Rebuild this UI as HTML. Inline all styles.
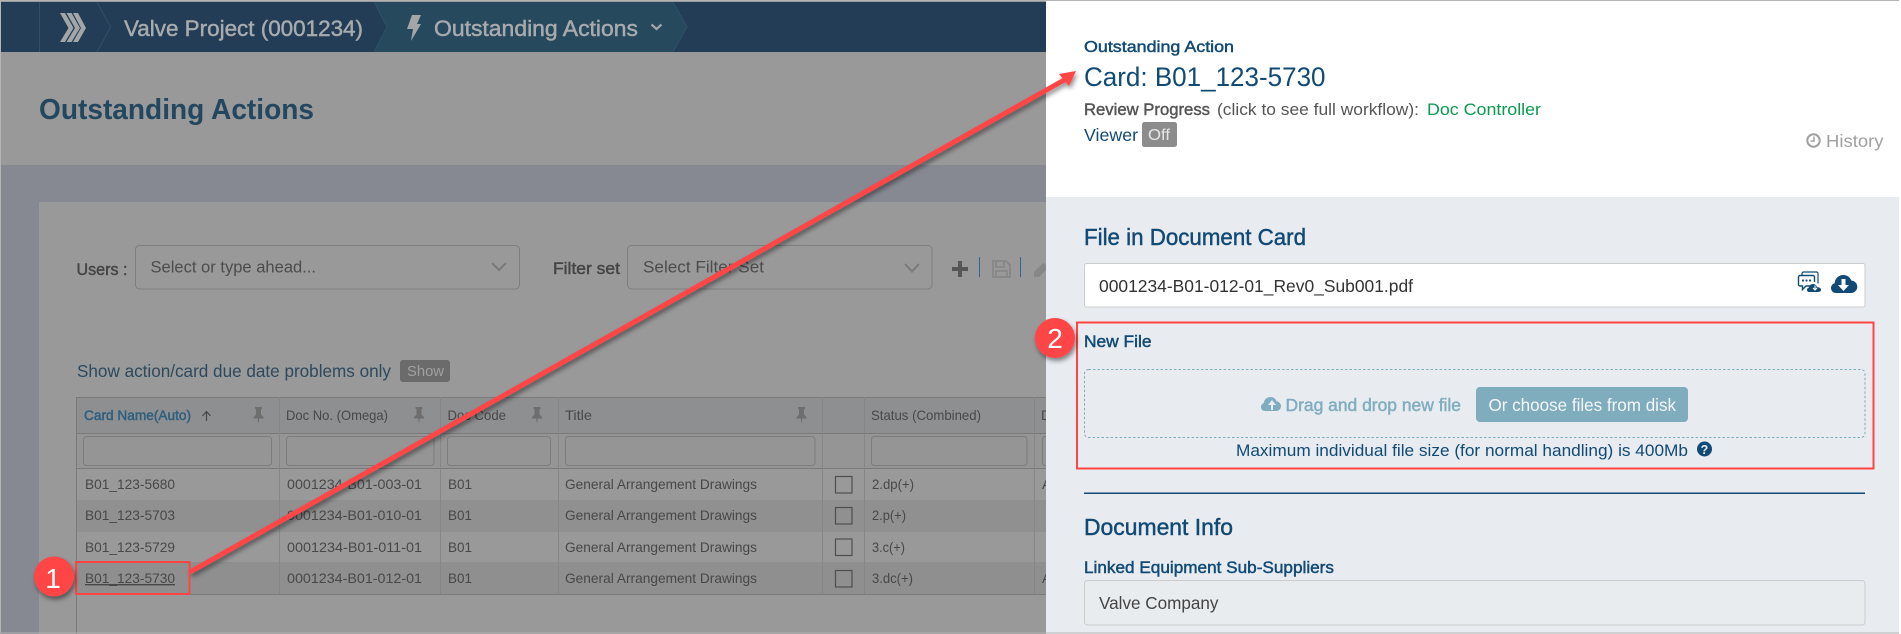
<!DOCTYPE html>
<html><head><meta charset="utf-8"><title>Outstanding Actions</title>
<style>
html,body{margin:0;padding:0;background:#999;width:1901px;height:634px;overflow:hidden}
svg{display:block}
text{font-family:"Liberation Sans",sans-serif;white-space:pre}
.m{stroke-width:.45px;paint-order:stroke}
</style></head><body>
<svg xmlns="http://www.w3.org/2000/svg" width="1901" height="634" viewBox="0 0 1901 634">
<defs>
<filter id="s" x="-20%" y="-20%" width="140%" height="140%"><feDropShadow dx="1.5" dy="3" stdDeviation="2.5" flood-color="#000" flood-opacity=".45"/></filter>
<g id="pin"><path d="M2.500 0h7v1.600l-1 .7v5.200l2.500 2.600v1.400H6.800L6 17 5.200 11.500H1V10.100l2.500-2.600V2.300l-1-.7z" fill="#6e6e6e"/></g>
</defs>
<!-- left page background -->
<rect width="1046" height="634" fill="#999"/>
<rect y="165" width="1046" height="469" fill="#868992"/>
<rect x="39" y="202" width="1007" height="432" fill="#999"/>
<!-- nav -->
<rect y="2" width="1046" height="50" fill="#223d55"/>
<path d="M374 2H673L687 27 673 52H374L387 27z" fill="#27495d"/>
<path d="M39.500 2V52M97 2L110.500 27 97 52M374 2L387 27 374 52M673 2L687 27 673 52" fill="none" stroke="#2f5069" stroke-width="1"/>
<g fill="#a3a6a8">
<path d="M60 13h5l8.500 15-8.500 14h-5l8.500-14z"/>
<path d="M66.500 13h5l8.500 15-8.500 14h-5l8.500-14z"/>
<path d="M73 13h5l8 15-8 14h-5l8-14z"/>
<path d="M412 15H421L417 24H421L411 41 413 29H407z"/>
<path d="M651.500 24.500l5 4.500 5-4.500" fill="none" stroke="#a3a6a8" stroke-width="2.200"/>
</g>
<text x="124" y="36" font-size="22" fill="#a8abad" class="m" stroke="#a8abad" textLength="239" lengthAdjust="spacingAndGlyphs">Valve Project (0001234)</text>
<text x="434" y="36" font-size="22" fill="#a8abad" class="m" stroke="#a8abad" textLength="204" lengthAdjust="spacingAndGlyphs">Outstanding Actions</text>
<text x="39" y="119" font-size="29" font-weight="700" fill="#22475f" textLength="275" lengthAdjust="spacingAndGlyphs">Outstanding Actions</text>
<!-- filters -->
<text x="76.500" y="275" font-size="16.500" fill="#454545" class="m" stroke="#454545" textLength="51" lengthAdjust="spacingAndGlyphs">Users :</text>
<rect x="135.500" y="245.500" width="384" height="43.500" rx="4" fill="none" stroke="#7e7e7e"/>
<text x="150.500" y="272.500" font-size="16.500" fill="#4c4c4c" textLength="165.500" lengthAdjust="spacingAndGlyphs">Select or type ahead...</text>
<path d="M492 263l7 7 7-7" fill="none" stroke="#7a7a7a" stroke-width="2"/>
<text x="553" y="274" font-size="16.500" fill="#454545" class="m" stroke="#454545" textLength="67" lengthAdjust="spacingAndGlyphs">Filter set</text>
<rect x="627.500" y="245.500" width="304.500" height="43.500" rx="4" fill="none" stroke="#7e7e7e"/>
<text x="643" y="272.500" font-size="16.500" fill="#4c4c4c" textLength="121" lengthAdjust="spacingAndGlyphs">Select Filter Set</text>
<path d="M905 264l7 7.500 7-7.500" fill="none" stroke="#7a7a7a" stroke-width="2"/>
<path d="M958 261h4v6h6v4h-6v6h-4v-6h-6v-4h6z" fill="#565656"/>
<path d="M979.500 257v20M1020.500 257v20" stroke="#2e6a8e" stroke-width="1"/>
<path d="M993 261h13l4 4v12h-17zM996 262v5h8v-5M996 277v-6h11v6" fill="none" stroke="#878787" stroke-width="1.800"/>
<path d="M1034 277v-5l9-9 3 2v5l-7 7z" fill="#878787"/>
<!-- show -->
<text x="77" y="377" font-size="17.500" fill="#2c495e" textLength="314" lengthAdjust="spacingAndGlyphs">Show action/card due date problems only</text>
<rect x="400" y="360" width="50" height="22" rx="3" fill="#6b6b6b"/>
<text x="407" y="376" font-size="15" fill="#a0a0a0" textLength="37" lengthAdjust="spacingAndGlyphs">Show</text>
<!-- table -->
<rect x="77" y="397" width="969" height="36" fill="#8e8f90"/>
<rect x="77" y="433" width="969" height="35" fill="#959595"/>
<rect x="77" y="500" width="969" height="32" fill="#909090"/>
<rect x="77" y="562" width="969" height="32" fill="#8f8f8f"/>
<path d="M76.500 397V634M76.500 397.500H1046M76 433.500H1046M76 468.500H1046M76 594.500H1046" fill="none" stroke="#7a7a7a" stroke-width="1"/>
<path d="M279.500 397V594M440.500 397V594M558.500 397V594M822.500 397V594M864.500 397V594M1034.500 397V594" stroke="#868686" stroke-width="1"/>
<g fill="none" stroke="#7c7c7c">
<rect x="83.500" y="436.500" width="188" height="29" rx="3"/>
<rect x="286.500" y="436.500" width="147.500" height="29" rx="3"/>
<rect x="447.500" y="436.500" width="103" height="29" rx="3"/>
<rect x="565.500" y="436.500" width="249.500" height="29" rx="3"/>
<rect x="871.500" y="436.500" width="155.500" height="29" rx="3"/>
<rect x="1042.500" y="436.500" width="20" height="29" rx="3"/>
</g>
<g font-size="14" fill="#484848">
<text x="84" y="420" fill="#2d5f7f" class="m" stroke="#2d5f7f" textLength="107" lengthAdjust="spacingAndGlyphs">Card Name(Auto)</text>
<text x="286" y="420" textLength="102" lengthAdjust="spacingAndGlyphs">Doc No. (Omega)</text>
<text x="447.500" y="420" textLength="58.500" lengthAdjust="spacingAndGlyphs">Doc Code</text>
<text x="565" y="420" textLength="27" lengthAdjust="spacingAndGlyphs">Title</text>
<text x="871" y="420" textLength="110" lengthAdjust="spacingAndGlyphs">Status (Combined)</text>
<text x="1041" y="420">D</text>
<text x="85" y="489" textLength="90" lengthAdjust="spacingAndGlyphs">B01_123-5680</text>
<text x="287" y="489" textLength="135" lengthAdjust="spacingAndGlyphs">0001234-B01-003-01</text>
<text x="448" y="489" textLength="24" lengthAdjust="spacingAndGlyphs">B01</text>
<text x="565" y="489" textLength="192" lengthAdjust="spacingAndGlyphs">General Arrangement Drawings</text>
<text x="872" y="489" textLength="42" lengthAdjust="spacingAndGlyphs">2.dp(+)</text>
<text x="1042" y="489">A</text>
<text x="85" y="520" textLength="90" lengthAdjust="spacingAndGlyphs">B01_123-5703</text>
<text x="287" y="520" textLength="135" lengthAdjust="spacingAndGlyphs">0001234-B01-010-01</text>
<text x="448" y="520" textLength="24" lengthAdjust="spacingAndGlyphs">B01</text>
<text x="565" y="520" textLength="192" lengthAdjust="spacingAndGlyphs">General Arrangement Drawings</text>
<text x="872" y="520" textLength="34" lengthAdjust="spacingAndGlyphs">2.p(+)</text>
<text x="85" y="552" textLength="90" lengthAdjust="spacingAndGlyphs">B01_123-5729</text>
<text x="287" y="552" textLength="135" lengthAdjust="spacingAndGlyphs">0001234-B01-011-01</text>
<text x="448" y="552" textLength="24" lengthAdjust="spacingAndGlyphs">B01</text>
<text x="565" y="552" textLength="192" lengthAdjust="spacingAndGlyphs">General Arrangement Drawings</text>
<text x="872" y="552" textLength="33" lengthAdjust="spacingAndGlyphs">3.c(+)</text>
<text x="85" y="583" text-decoration="underline" textLength="90" lengthAdjust="spacingAndGlyphs">B01_123-5730</text>
<text x="287" y="583" textLength="135" lengthAdjust="spacingAndGlyphs">0001234-B01-012-01</text>
<text x="448" y="583" textLength="24" lengthAdjust="spacingAndGlyphs">B01</text>
<text x="565" y="583" textLength="192" lengthAdjust="spacingAndGlyphs">General Arrangement Drawings</text>
<text x="872" y="583" textLength="41" lengthAdjust="spacingAndGlyphs">3.dc(+)</text>
<text x="1042" y="583">A</text>
</g>
<path d="M206.500 421v-9M202.500 416l4-4.500 4 4.500" fill="none" stroke="#484848" stroke-width="1.200"/>
<use href="#pin" x="252.500" y="407"/><use href="#pin" x="413" y="407"/><use href="#pin" x="531" y="407"/><use href="#pin" x="795.500" y="407"/>
<g fill="none" stroke="#4e4e4e" stroke-width="1.200">
<rect x="835.500" y="476.500" width="16.500" height="16.500"/>
<rect x="835.500" y="507.500" width="16.500" height="16.500"/>
<rect x="835.500" y="539" width="16.500" height="16.500"/>
<rect x="835.500" y="570.500" width="16.500" height="16.500"/>
</g>
<!-- right panel -->
<rect x="1046" y="0" width="853" height="634" fill="#e8ebf0"/>
<rect x="1046" y="1" width="853" height="196" fill="#fff"/>
<text x="1084" y="52" font-size="16" fill="#104a75" class="m" stroke="#104a75" textLength="150" lengthAdjust="spacingAndGlyphs">Outstanding Action</text>
<text x="1084" y="86" font-size="27" fill="#104a75" textLength="241.500" lengthAdjust="spacingAndGlyphs">Card: B01_123-5730</text>
<text x="1084" y="115" font-size="16.500" fill="#555" class="m" stroke="#555" textLength="126" lengthAdjust="spacingAndGlyphs">Review Progress</text>
<text x="1217" y="115" font-size="16.500" fill="#555" textLength="202" lengthAdjust="spacingAndGlyphs">(click to see full workflow):</text>
<text x="1427" y="115" font-size="16.500" fill="#0b9a50" textLength="114" lengthAdjust="spacingAndGlyphs">Doc Controller</text>
<text x="1084" y="141" font-size="17.500" fill="#104a75" textLength="54" lengthAdjust="spacingAndGlyphs">Viewer</text>
<rect x="1142" y="122" width="35" height="25" rx="2.500" fill="#8c8c8c"/>
<text x="1148" y="140" font-size="15.500" fill="#e6e6e6" textLength="22" lengthAdjust="spacingAndGlyphs">Off</text>
<circle cx="1813.500" cy="140.500" r="6.200" fill="none" stroke="#a0a0a0" stroke-width="2"/>
<path d="M1814 136.500v4.500h-3.500" fill="none" stroke="#a0a0a0" stroke-width="1.500"/>
<text x="1826" y="147" font-size="17.500" fill="#a0a0a0" textLength="57.500" lengthAdjust="spacingAndGlyphs">History</text>
<text x="1084" y="245" font-size="23" fill="#104a75" class="m" stroke="#104a75" textLength="222" lengthAdjust="spacingAndGlyphs">File in Document Card</text>
<rect x="1084.500" y="263.500" width="780.500" height="43.500" rx="2" fill="#fff" stroke="#ccc"/>
<text x="1099" y="292" font-size="17.500" fill="#333" textLength="314" lengthAdjust="spacingAndGlyphs">0001234-B01-012-01_Rev0_Sub001.pdf</text>
<!-- comment cloud icon -->
<path d="M1802 275.500v-2a1.500 1.500 0 0 1 1.500-1.500h13a1.500 1.500 0 0 1 1.500 1.500v10" fill="none" stroke="#104a75" stroke-width="1.200"/>
<path d="M1815 286h-9l-3.500 3.500V286h-2.500a1.500 1.500 0 0 1-1.500-1.500v-7.500a1.500 1.500 0 0 1 1.500-1.500h13a1.500 1.500 0 0 1 1.500 1.500v5" fill="#fff" stroke="#104a75" stroke-width="1.400"/>
<circle cx="1803" cy="280.500" r="1.100" fill="#104a75"/><circle cx="1806.500" cy="280.500" r="1.100" fill="#104a75"/><circle cx="1810" cy="280.500" r="1.100" fill="#104a75"/>
<path d="M1809 292c-2.500 0-2.800-3.700-.3-4.100 .3-2.400 2.300-3.900 4.300-3.900 2 0 3.600 1.300 4 3.300 2.800 0 4 1 4 2.500 0 1.400-1.200 2.200-2.500 2.200z" fill="#104a75"/>
<path d="M1815 285.500v3.500M1813 288l2 2 2-2" fill="none" stroke="#fff" stroke-width="1.100"/>
<!-- cloud download -->
<path d="M1836 293c-3 0-5-2.300-5-5 0-2.300 1.500-4.200 3.600-4.800 .3-4.500 4-8.200 8.700-8.200 3.700 0 6.800 2.300 8 5.500 3.500 .2 6 3 6 6.300 0 3.500-2.800 6.200-6.200 6.200z" fill="#104a75"/>
<path d="M1841.500 279h4v6h3.500l-5.500 6-5.500-6h3.500z" fill="#fff"/>
<!-- new file -->
<text x="1084" y="347" font-size="16.500" fill="#104a75" class="m" stroke="#104a75" textLength="67.500" lengthAdjust="spacingAndGlyphs">New File</text>
<rect x="1084.500" y="369.500" width="780.500" height="68" rx="4" fill="none" stroke="#7dacbd" stroke-dasharray="2.500 2"/>
<path d="M1265 411c-2.500 0-4-1.800-4-4 0-1.800 1.200-3.200 2.700-3.700 .3-3.400 3-6.300 6.700-6.300 2.800 0 5.200 1.700 6.200 4.200 2.400 .3 4.400 2.400 4.400 5 0 2.700-2.200 4.800-4.800 4.800z" fill="#7fadbf"/>
<path d="M1271 410v-5h-3l4-5 4 5h-3v5z" fill="#e8ebf0"/>
<text x="1285.500" y="411" font-size="17.500" fill="#7fadbf" class="m" stroke="#7fadbf" textLength="175.500" lengthAdjust="spacingAndGlyphs">Drag and drop new file</text>
<rect x="1476" y="387" width="212" height="35" rx="4" fill="#7fadbe"/>
<text x="1488.500" y="411" font-size="17.500" fill="#f4f7f9" textLength="187.500" lengthAdjust="spacingAndGlyphs">Or choose files from disk</text>
<text x="1236" y="456" font-size="17" fill="#104a75" textLength="452" lengthAdjust="spacingAndGlyphs">Maximum individual file size (for normal handling) is 400Mb</text>
<circle cx="1704.500" cy="449" r="7.500" fill="#104a75"/>
<text x="1704.500" y="454" font-size="12.500" font-weight="700" fill="#e8ebf0" text-anchor="middle">?</text>
<rect x="1084" y="492.500" width="781" height="1.500" fill="#104a75"/>
<text x="1084" y="535" font-size="23" fill="#104a75" class="m" stroke="#104a75" textLength="149" lengthAdjust="spacingAndGlyphs">Document Info</text>
<text x="1084" y="573" font-size="16.500" fill="#104a75" class="m" stroke="#104a75" textLength="250" lengthAdjust="spacingAndGlyphs">Linked Equipment Sub-Suppliers</text>
<rect x="1084.500" y="580.500" width="780.500" height="44.500" rx="3" fill="#e9ecef" stroke="#ccc"/>
<text x="1099" y="609" font-size="17.500" fill="#444" textLength="119.500" lengthAdjust="spacingAndGlyphs">Valve Company</text>
<!-- annotations -->
<g filter="url(#s)">
<path d="M190 572L1066 79" stroke="#ff4444" stroke-width="5" fill="none"/>
<path d="M1076 71L1059 74 1069 86z" fill="#ff4444"/>
</g>
<rect x="76" y="562" width="113.500" height="32" fill="none" stroke="#ff4444" stroke-width="2"/>
<rect x="1077" y="322.500" width="796.500" height="146" fill="none" stroke="#ff4444" stroke-width="2"/>
<g filter="url(#s)"><circle cx="54" cy="576.500" r="20" fill="#ff4444"/><circle cx="1055" cy="338" r="20" fill="#ff4444"/></g>
<text x="53" y="588" font-size="28" fill="#fff" text-anchor="middle">1</text>
<text x="1055" y="348" font-size="28" fill="#fff" text-anchor="middle">2</text>
<!-- frame -->
<rect x=".5" y=".5" width="1899" height="632.500" fill="none" stroke="#b4b4b4" stroke-width="1"/>
<rect x="1899" y="0" width="2" height="634" fill="#fff"/>
</svg>
</body></html>
